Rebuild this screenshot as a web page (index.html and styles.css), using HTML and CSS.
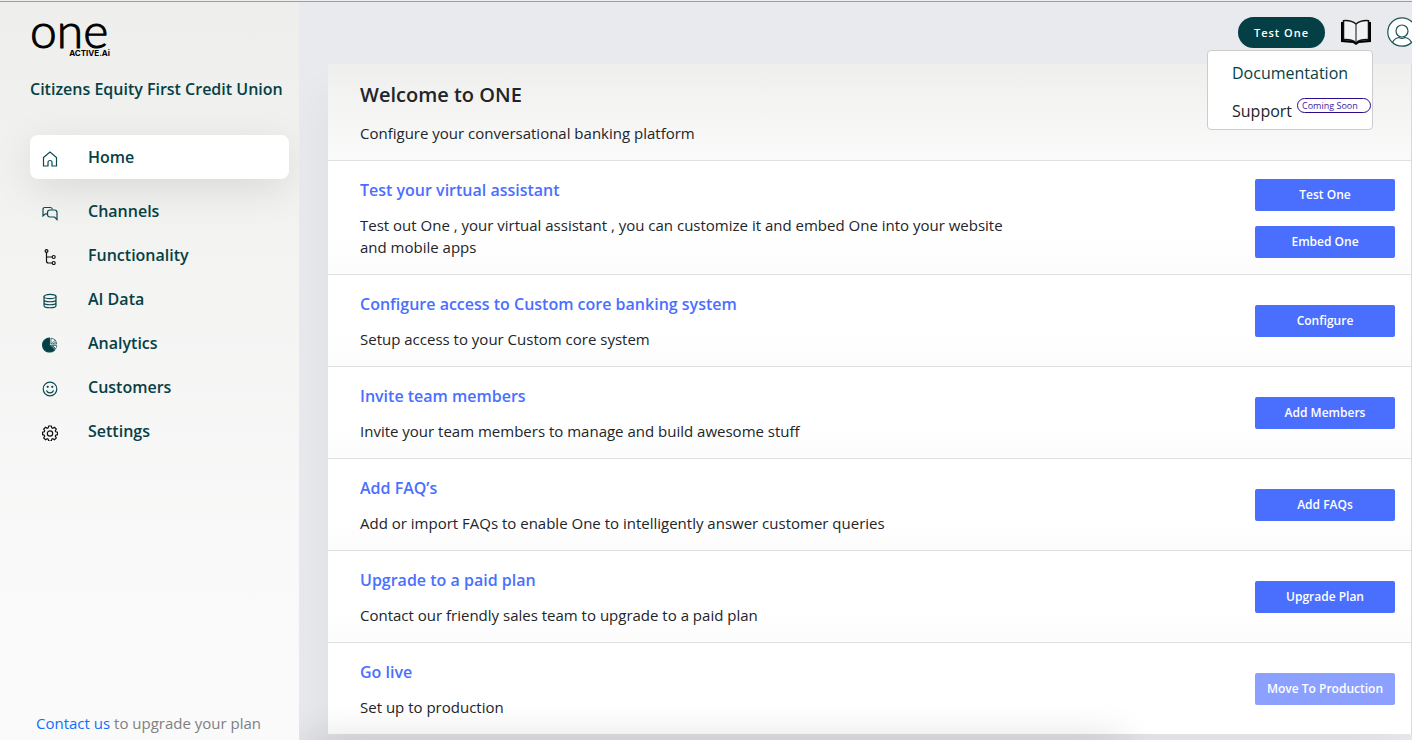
FILE: index.html
```html
<!DOCTYPE html>
<html lang="en">
<head>
<meta charset="utf-8">
<title>ONE - Home</title>
<link rel="stylesheet" href="styles.css">
</head>
<body>
<div class="app">
  <aside class="sidebar">
    <div class="logo"><span class="logo-name">one</span><span class="logo-sub">ACTIVE.Ai</span></div>
    <p class="org">Citizens Equity First Credit Union</p>
    <nav class="nav">
      <a class="nav-item active" href="#"><svg class="icon" viewBox="0 0 16 16"><path d="M1.500 6.500 8 1l6.500 5.500V15H10v-3.500a2 2 0 0 0-4 0V15H1.500z"/></svg>Home</a>
      <a class="nav-item" href="#"><svg class="icon" viewBox="0 0 16 16"><path d="M5.500 8.800H3.500L1 11V4.500Q1 2.500 3 2.500h5.500q1.700 0 1.900 2"/><path d="M8 5h4.500Q15 5 15 7.500V14.500L12.500 12H8Q5.500 12 5.500 9.500v-2Q5.500 5 8 5z"/></svg>Channels</a>
      <a class="nav-item" href="#"><svg class="icon dark" viewBox="0 0 16 16"><circle cx="4.500" cy="2" r="1.400"/><circle cx="11.700" cy="8" r="1.500"/><circle cx="11.700" cy="14" r="1.500"/><path d="M4.500 3.500V12q0 2 2 2h3.700M4.500 8h5.700"/></svg>Functionality</a>
      <a class="nav-item" href="#"><svg class="icon" viewBox="0 0 16 16"><ellipse cx="8" cy="3.500" rx="6" ry="2.200"/><path d="M2 3.500v9c0 3 12 3 12 0v-9M2 6.500c0 3 12 3 12 0M2 9.500c0 3 12 3 12 0"/></svg>AI Data</a>
      <a class="nav-item" href="#"><svg class="icon" viewBox="0 0 16 16"><path class="solid" d="M7.500 1A7 7 0 1 0 12.500 13L7.500 8z"/><path class="thin" d="M9 1.200A6.500 6.500 0 0 1 14.700 7L9 7zM9.500 8.500h5.200q0 2-1.400 3.700zM9.500 6.500l4-3.500M11 7l3-2M11 9l2.500 2.500"/></svg>Analytics</a>
      <a class="nav-item" href="#"><svg class="icon" viewBox="0 0 16 16"><circle cx="8" cy="8" r="6.800"/><path d="M4.500 9.300c1 3.300 6 3.300 7 0"/><circle class="solid" cx="5.700" cy="5.800" r=".5"/><circle class="solid" cx="10.300" cy="5.800" r=".5"/></svg>Customers</a>
      <a class="nav-item" href="#"><svg class="icon dark" viewBox="0 0 16 16"><path d="M6.700 1h2.600l.5 1.900 1 .4 1.700-1 1.800 1.800-1 1.700.4 1 1.800.4v2.500l-1.800.5-.4 1 1 1.700-1.800 1.800-1.700-1-1 .4-.5 1.900H6.700l-.5-1.900-1-.4-1.700 1-1.800-1.800 1-1.700-.4-1L.6 9.700V7.200l1.700-.4.4-1-1-1.700 1.800-1.800 1.700 1 1-.4z"/><circle cx="8" cy="8.500" r="2.700"/></svg>Settings</a>
    </nav>
    <p class="upgrade"><a href="#">Contact us</a> to upgrade your plan</p>
  </aside>
  <div class="content">
    <header class="topbar">
      <button class="pill" type="button">Test One</button>
      <button class="icon-btn" type="button" aria-label="Help"><svg width="32" height="26" viewBox="0 0 32 26"><path fill="#000" d="M1 3h3v18l11 1 1 1 1-1 11-1V3h3v20l-12 1-3 2-3-2-12-1z"/><path fill="#f2f3f5" stroke="#111" stroke-width="1.500" d="M16 5Q11 1 3.500 1.700v19Q11 20 16 23.500 21 20 28.500 20.700v-19Q21 1 16 5z"/><path stroke="#444" stroke-width="1.300" d="M16 4.500V23"/></svg></button>
      <button class="icon-btn user" type="button" aria-label="Account"><svg width="30" height="30" viewBox="0 0 30 30" fill="#fff" stroke="#1e5357" stroke-width="1.200"><circle cx="15" cy="15" r="14.200"/><circle cx="15" cy="14" r="6"/><path fill="none" d="M5.500 25.500Q8 20.800 12 20.500q3 2 6 0 4 .3 6.500 5"/></svg></button>
      <div class="menu">
        <a class="menu-doc" href="#">Documentation</a>
        <div class="menu-support">Support <span class="soon">Coming Soon</span></div>
      </div>
    </header>
    <main class="card">
      <section class="intro"><h1>Welcome to ONE</h1><p>Configure your conversational banking platform</p></section>
      <section class="row"><div class="text"><h2>Test your virtual assistant</h2><p>Test out One , your virtual assistant , you can customize it and embed One into your website and mobile apps</p></div><div class="actions"><button type="button">Test One</button><button type="button">Embed One</button></div></section>
      <section class="row"><div class="text"><h2>Configure access to Custom core banking system</h2><p>Setup access to your Custom core system</p></div><div class="actions"><button type="button">Configure</button></div></section>
      <section class="row"><div class="text"><h2>Invite team members</h2><p>Invite your team members to manage and build awesome stuff</p></div><div class="actions"><button type="button">Add Members</button></div></section>
      <section class="row"><div class="text"><h2>Add FAQ’s</h2><p>Add or import FAQs to enable One to intelligently answer customer queries</p></div><div class="actions"><button type="button">Add FAQs</button></div></section>
      <section class="row"><div class="text"><h2>Upgrade to a paid plan</h2><p>Contact our friendly sales team to upgrade to a paid plan</p></div><div class="actions"><button type="button">Upgrade Plan</button></div></section>
      <section class="row"><div class="text"><h2>Go live</h2><p>Set up to production</p></div><div class="actions"><button type="button" disabled>Move To Production</button></div></section>
    </main>
    <div class="bottom-shade"></div>
  </div>
</div>
</body>
</html>
```
FILE: styles.css
```css
* { box-sizing: border-box; }
body { margin: 0; font-family: "Open Sans", sans-serif; font-size: 15px; color: #212529; background: #e9eaee; }
h1, h2, p { margin: 0; }
a { text-decoration: none; }
button { font-family: inherit; border: 0; cursor: pointer; }
.app { display: flex; min-height: 100vh; border-top: 1px solid #eee; box-shadow: inset 0 1px 0 #9b9f9d; overflow: hidden; }

.sidebar { position: relative; z-index: 1; flex: none; width: 299px; display: flex; flex-direction: column; padding: 16px 10px 6px 30px; overflow: hidden; background: linear-gradient(#eeeeec, #f9f9f9 75%, #fafafa); box-shadow: inset 0 1px 0 #9b9f9d; }
.logo { width: 80px; display: flex; flex-direction: column; font-family: Lato, sans-serif; color: #000; }
.logo-name { margin-bottom: 6px; font-size: 48px; font-weight: 300; line-height: 26px; -webkit-text-stroke: 1px #000; }
.logo-sub { align-self: flex-end; font-family: Inter, sans-serif; font-size: 8px; font-weight: 700; line-height: 8px; }
.org { margin-top: 20px; font-size: 16px; font-weight: 600; line-height: 24px; color: #063f44; white-space: nowrap; }
.nav { margin-top: 34px; }
.nav-item { display: flex; align-items: center; gap: 30px; height: 44px; padding: 0 12px; border-radius: 8px; font-size: 16px; font-weight: 600; color: #063f44; }
.nav-item.active { margin-bottom: 10px; background: #fff; box-shadow: 0 10px 40px rgba(0, 0, 0, .1); }
.icon { width: 16px; height: 16px; margin-top: 4px; fill: none; stroke: #0b4a50; stroke-width: 1.2; }
.icon.dark { stroke: #111; }
.icon .solid { fill: #063f44; }
.icon .thin { stroke-width: .7; }
.upgrade { margin-top: auto; padding-left: 6px; line-height: 22px; color: #808080; }
.upgrade a { color: #0d6efd; }

.content { position: relative; flex: 1; min-width: 0; display: flex; flex-direction: column; padding-left: 29px; }
.topbar { position: relative; display: flex; justify-content: flex-end; align-items: center; gap: 15px; height: 63px; padding-bottom: 1px; }
.pill { width: 87px; height: 31px; border-radius: 16px; background: #033f44; color: #fff; font-size: 11px; font-weight: 600; letter-spacing: 1px; }
.icon-btn { display: flex; padding: 0; background: none; }
.user { margin-right: -5px; }
.menu { position: absolute; z-index: 2; top: 49px; right: 39px; width: 166px; height: 80px; padding: 8px 0 0 24px; border: 1px solid #ccc; border-radius: 4px; background: #fff; font-size: 16px; line-height: 28px; }
.menu-doc { display: block; color: #063f44; }
.menu-support { display: flex; gap: 5px; margin-top: 10px; }
.soon { width: 74px; height: 15px; margin-top: 1px; padding-left: 4px; border: 1px solid #2a0a8f; border-radius: 8px; font-size: 9px; line-height: 13px; color: #3a1a9c; }

.card { position: relative; margin-right: 1px; background: #fff; box-shadow: -10px 30px 40px rgba(0, 0, 0, .04), 1px 0 0 #dcdcdc; }
.intro { padding: 16px 32px; background: linear-gradient(#efefed, #fafafa); border-bottom: 1px solid #dee0e2; }
.intro h1 { font-size: 20px; font-weight: 600; line-height: 30px; }
.intro p { margin-top: 12px; line-height: 22px; }
.row { display: flex; justify-content: space-between; align-items: center; padding: 16px 16px 15px 32px; border-bottom: 1px solid #dee0e2; background: linear-gradient(#fff 65%, #fcfcfc); }
.row:last-child { border-bottom: 0; background: #fff; }
.text { max-width: 660px; }
.text h2 { font-size: 16px; font-weight: 600; line-height: 26px; color: #4a6fff; }
.text p { padding-bottom: 1px; margin-top: 11px; line-height: 22px; }
.actions { display: flex; flex-direction: column; gap: 15px; }
.actions button { width: 140px; height: 32px; padding: 0 0 1px; border-radius: 2px; background: #4a6fff; color: #fff; font-size: 12px; font-weight: 600; }
.actions button:disabled { background: #8ca1ff; }

/* soft shade rising from the lower edge of the page */
.bottom-shade { position: absolute; top: 100%; left: 0; right: 26%; height: 40px; box-shadow: 0 0 40px rgba(0, 0, 0, .14); pointer-events: none; }
```
